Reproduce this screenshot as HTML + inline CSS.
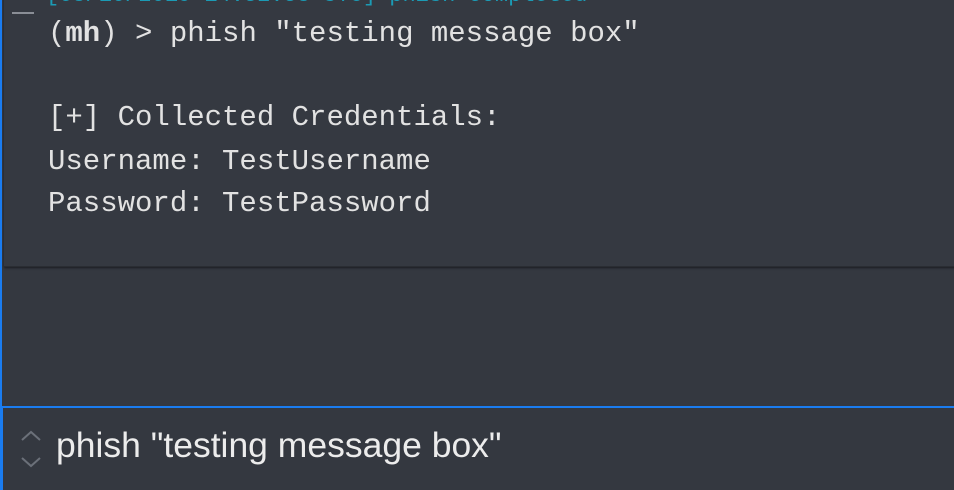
<!DOCTYPE html>
<html><head><style>
html,body{margin:0;padding:0;width:954px;height:490px;overflow:hidden;background:#343840;}
.left{position:absolute;left:0;top:0;width:2px;height:408px;background:#1a7cf0;}
.card{position:absolute;left:4px;top:-10px;width:960px;height:276px;background:#353941;box-shadow:0 1px 2px rgba(0,0,0,.5);border-bottom:1px solid #2a2d33;}
.mono{position:absolute;font-family:"Liberation Mono",monospace;font-size:29px;color:#e2e2e2;white-space:pre;}
.ts{color:#1b9bb5;}
.dash{position:absolute;left:12px;top:12px;width:22px;height:2px;background:#8a8e96;}
.input{position:absolute;left:0;top:406px;width:954px;height:84px;border-top:2px solid #1a7cf0;border-left:3px solid #1a7cf0;box-sizing:border-box;background:#343840;}
.itext{position:absolute;left:56px;top:425px;font-family:"Liberation Sans",sans-serif;font-size:35.5px;color:#ececec;white-space:pre;}
</style></head><body>
<div class="card"></div>
<div class="left"></div>
<div class="mono ts" style="left:46px;top:-17px;font-size:22px;">[08/10/2019 14:52:53 UTC] phish completed</div>
<div class="dash"></div>
<div class="mono" style="left:48px;top:17px;">(<b style="font-weight:bold">mh</b>) &gt; phish "testing message box"</div>
<div class="mono" style="left:48px;top:101px;">[+] Collected Credentials:</div>
<div class="mono" style="left:48px;top:145px;">Username: TestUsername</div>
<div class="mono" style="left:48px;top:187px;">Password: TestPassword</div>
<div class="input"></div>
<svg style="position:absolute;left:20px;top:428px" width="24" height="44" viewBox="0 0 24 44"><path d="M2 12 L11 4 L20 12" fill="none" stroke="#6b7079" stroke-width="2"/><path d="M2 30 L11 38 L20 30" fill="none" stroke="#6b7079" stroke-width="2"/></svg>
<div class="itext">phish "testing message box"</div>
</body></html>
